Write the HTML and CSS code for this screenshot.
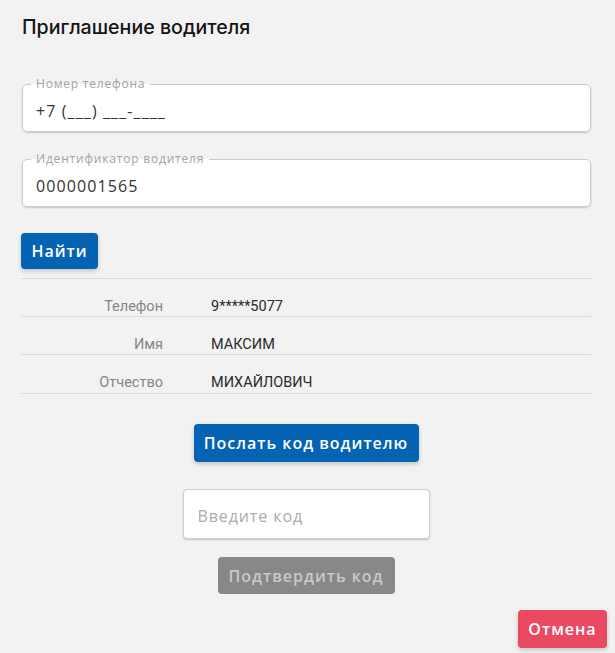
FILE: index.html
```html
<!DOCTYPE html>
<html lang="ru">
<head>
<meta charset="utf-8">
<title>Приглашение водителя</title>
<link rel="stylesheet" href="styles.css">
</head>
<body>
<div class="dialog">
  <h1 class="title">Приглашение водителя</h1>

  <fieldset class="field field-first">
    <legend class="field-label">Номер телефона</legend>
    <input class="field-input" type="text" value="+7 (___) ___-____">
  </fieldset>

  <fieldset class="field">
    <legend class="field-label">Идентификатор водителя</legend>
    <input class="field-input" type="text" value="0000001565">
  </fieldset>

  <button class="btn btn-blue btn-find" type="button">Найти</button>

  <div class="info">
    <div class="info-row"><span class="info-label">Телефон</span><span class="info-value">9*****5077</span></div>
    <div class="info-row"><span class="info-label">Имя</span><span class="info-value">МАКСИМ</span></div>
    <div class="info-row"><span class="info-label">Отчество</span><span class="info-value">МИХАЙЛОВИЧ</span></div>
  </div>

  <div class="center-col">
    <button class="btn btn-blue btn-send" type="button">Послать код водителю</button>
    <input class="code-input" type="text" placeholder="Введите код">
    <button class="btn btn-gray btn-confirm" type="button">Подтвердить код</button>
  </div>

  <div class="footer">
    <button class="btn btn-red btn-cancel" type="button">Отмена</button>
  </div>
</div>
</body>
</html>
```

FILE: styles.css
```css
* { box-sizing: border-box; }

html, body {
  margin: 0;
  padding: 0;
  background: #f2f2f2;
}

body {
  font-family: "Open Sans", "Liberation Sans", sans-serif;
  color: #222;
}

.dialog {
  width: 615px;
  height: 653px;
  padding: 14px 24px 0 21px;
  display: flex;
  flex-direction: column;
  align-items: stretch;
}

.title {
  margin: 0 0 0 1px;
  font-family: Inter, "Roboto", sans-serif;
  font-size: 19.6px;
  font-weight: 500;
  line-height: 26px;
  color: #141414;
}

.field {
  margin: 20px 0 0 1px;
  padding: 0 13px 9px;
  border: 1px solid #cbcbcb;
  border-radius: 5px;
  background: #fff;
  box-shadow: 0 1px 2px rgba(0, 0, 0, 0.18);
  min-width: 0;
}

.field-first { margin-top: 37px; }

.field-label {
  margin-left: -5px;
  padding: 0 5px;
  font-size: 12px;
  line-height: 14px;
  letter-spacing: 0.8px;
  color: #a3a3a3;
}

.field-input {
  display: block;
  width: 100%;
  margin-top: 9px;
  padding: 0;
  border: none;
  outline: none;
  background: transparent;
  font-family: "Open Sans", "Liberation Sans", sans-serif;
  font-size: 16px;
  letter-spacing: 1.1px;
  line-height: 22px;
  height: 22px;
  color: #333;
}

.btn {
  border: none;
  border-radius: 4px;
  font-family: "Open Sans", "Liberation Sans", sans-serif;
  font-size: 16px;
  font-weight: 600;
  letter-spacing: 1px;
  cursor: pointer;
  box-shadow: 0 2px 4px rgba(0, 0, 0, 0.2);
}

.btn-blue { background: #0563b3; color: #fff; }
.btn-gray { background: #888888; color: #c9c9c9; box-shadow: none; }
.btn-red { background: #ea4a61; color: #fff; }

.btn-find {
  align-self: flex-start;
  margin-top: 26px;
  width: 77px;
  height: 36px;
  padding: 0;
}

.info {
  margin-top: 9px;
  border-top: 1px solid #d9d9d9;
}

.info-row {
  display: flex;
  gap: 48px;
  height: 38px;
  padding-top: 20px;
  border-bottom: 1px solid #d9d9d9;
  font-family: Roboto, "Liberation Sans", sans-serif;
  font-size: 14.5px;
  line-height: 16px;
}

.info-row:last-child { height: 39px; }

.info-label {
  width: 142px;
  text-align: right;
  color: #868686;
}

.info-value { color: #2a2a2a; }

.center-col {
  display: flex;
  flex-direction: column;
  align-items: center;
}

.btn-send {
  margin-top: 30px;
  width: 225px;
  height: 38px;
  padding: 0;
}

.code-input {
  margin-top: 27px;
  width: 247px;
  height: 50px;
  padding: 3px 14px 0;
  border: 1px solid #cfcfcf;
  border-radius: 4px;
  background: #fff;
  box-shadow: 0 1px 2px rgba(0, 0, 0, 0.2);
  font-family: "Open Sans", "Liberation Sans", sans-serif;
  font-size: 16px;
  letter-spacing: 0.9px;
  color: #333;
  outline: none;
}

.code-input::placeholder { color: #ababab; }

.btn-confirm {
  margin-top: 18px;
  width: 177px;
  height: 37px;
  padding: 0;
}

.footer {
  margin-top: 16px;
  display: flex;
  justify-content: flex-end;
  margin-right: -16px;
}

.btn-cancel {
  width: 89px;
  height: 38px;
  padding: 0;
}
```
